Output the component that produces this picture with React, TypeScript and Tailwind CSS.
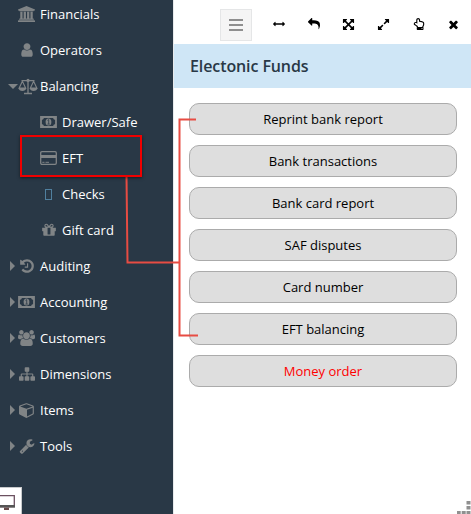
import { FaRegHandPointUp } from "react-icons/fa";

const paths = {
  bank: "M960 0l960 384v128h-128q0 26-20.5 45t-48.5 19h-1526q-28 0-48.5-19t-20.5-45h-128v-128zm-704 640h256v768h128v-768h256v768h128v-768h256v768h128v-768h256v768h59q28 0 48.5 19t20.5 45v64h-1664v-64q0-26 20.5-45t48.5-19h59v-768zm1595 960q28 0 48.5 19t20.5 45v128h-1920v-128q0-26 20.5-45t48.5-19h1782z",
  user: "M1536 1399q0 109-62.5 187t-150.5 78h-854q-88 0-150.5-78t-62.5-187q0-85 8.5-160.5t31.5-152 58.5-131 94-89 134.5-34.5q131 128 313 128t313-128q76 0 134.5 34.5t94 89 58.5 131 31.5 152 8.5 160.5zm-256-887q0 159-112.5 271.5t-271.5 112.5-271.5-112.5-112.5-271.5 112.5-271.5 271.5-112.5 271.5 112.5 112.5 271.5z",
  sitemap: "M1792 1248v320q0 40-28 68t-68 28h-320q-40 0-68-28t-28-68v-320q0-40 28-68t68-28h96v-192h-512v192h96q40 0 68 28t28 68v320q0 40-28 68t-68 28h-320q-40 0-68-28t-28-68v-320q0-40 28-68t68-28h96v-192h-512v192h96q40 0 68 28t28 68v320q0 40-28 68t-68 28h-320q-40 0-68-28t-28-68v-320q0-40 28-68t68-28h96v-192q0-52 38-90t90-38h512v-192h-96q-40 0-68-28t-28-68v-320q0-40 28-68t68-28h320q40 0 68 28t28 68v320q0 40-28 68t-68 28h-96v192h512q52 0 90 38t38 90v192h96q40 0 68 28t28 68z",
  wrench: "M448 1472q0-26-19-45t-45-19-45 19-19 45 19 45 45 19 45-19 19-45zm644-420l-682 682q-37 37-90 37-52 0-91-37l-106-108q-38-36-38-90 0-53 38-91l681-681q39 98 114.5 173.5t173.5 114.5zm634-435q0 39-23 106-47 134-164.5 217.5t-258.5 83.5q-185 0-316.5-131.5t-131.5-316.5 131.5-316.5 316.5-131.5q58 0 121.5 16.5t107.5 46.5q16 11 16 28t-16 28l-293 169v224l193 107q5-3 79-48.5t135.5-81 70.5-35.5q15 0 23.5 10t8.5 25z",
  history: "M1664 896q0 156-61 298t-164 245-245 164-298 61q-172 0-327-72.5t-264-204.5q-7-10-6.5-22.5t8.5-20.5l137-138q10-9 25-9 16 2 23 12 73 95 179 147t225 52q104 0 198.5-40.5t163.5-109.5 109.5-163.5 40.5-198.5-40.5-198.5-109.5-163.5-163.5-109.5-198.5-40.5q-98 0-188 35.5t-160 101.5l137 138q31 30 14 69-17 40-59 40h-448q-26 0-45-19t-19-45v-448q0-42 40-59 39-17 69 14l130 129q107-101 244.5-156.5t284.5-55.5q156 0 298 61t245 164 164 245 61 298zm-640-288v448q0 14-9 23t-23 9h-320q-14 0-23-9t-9-23v-64q0-14 9-23t23-9h224v-352q0-14 9-23t23-9h64q14 0 23 9t9 23z",
  gift: "M1056 1356v-716h-320v716q0 25 18 38.5t46 13.5h192q28 0 46-13.5t18-38.5zm-456-844h195l-126-161q-26-31-69-31-40 0-68 28t-28 68 28 68 68 28zm688-96q0-40-28-68t-68-28q-43 0-69 31l-125 161h194q40 0 68-28t28-68zm376 256v320q0 14-9 23t-23 9h-96v416q0 40-28 68t-68 28h-1088q-40 0-68-28t-28-68v-416h-96q-14 0-23-9t-9-23v-320q0-14 9-23t23-9h440q-93 0-158.5-65.5t-65.5-158.5 65.5-158.5 158.5-65.5q107 0 168 77l128 165 128-165q61-77 168-77 93 0 158.5 65.5t65.5 158.5-65.5 158.5-158.5 65.5h440q14 0 23 9t9 23z",
  cube: "M896 1629l640-349v-636l-640 233v752zm-64-865l698-254-698-254-698 254zm832-252v768q0 35-18 65t-49 47l-704 384q-28 16-61 16t-61-16l-704-384q-31-17-49-47t-18-65v-768q0-40 23-73t61-47l704-256q22-8 44-8t44 8l704 256q38 14 61 47t23 73z",
  users: "M593 896q-162 5-265 128h-134q-82 0-138-40.5t-56-118.5q0-353 124-353 6 0 43.5 21t97.5 42.5 119 21.5q67 0 133-23-5 37-5 66 0 159 93 256zm1071 637q0 120-73 189.5t-194 69.5h-874q-121 0-194-69.5t-73-189.5q0-53 3.5-103.5t14-109 26.5-108.5 43-97.5 62-81 85.5-53.5 111.5-20q10 0 43 21.5t73 48 107 48 135 21.5 135-21.5 107-48 73-48 43-21.5q61 0 111.5 20t85.5 53.5 62 81 43 97.5 26.5 108.5 14 109 3.5 103.5zm-1024-1277q0 106-75 181t-181 75-181-75-75-181 75-181 181-75 181 75 75 181zm704 384q0 159-112.5 271.5t-271.5 112.5-271.5-112.5-112.5-271.5 112.5-271.5 271.5-112.5 271.5 112.5 112.5 271.5zm576 225q0 78-56 118.5t-138 40.5h-134q-103-123-265-128 93-97 93-256 0-29-5-66 66 23 133 23 59 0 119-21.5t97.5-42.5 43.5-21q124 0 124 353zm-128-609q0 106-75 181t-181 75-181-75-75-181 75-181 181-75 181 75 75 181z",
  arrowsH: "M1792 896q0 26-19 45l-256 256q-19 19-45 19t-45-19-19-45v-128h-1024v128q0 26-19 45t-45 19-45-19l-256-256q-19-19-19-45t19-45l256-256q19-19 45-19t45 19 19 45v128h1024v-128q0-26 19-45t45-19 45 19l256 256q19 19 19 45z",
  reply: "M1792 1120q0 166-127 451-3 7-10.5 24t-13.5 30-13 22q-12 17-28 17-15 0-23.5-10t-8.5-25q0-9 2.5-26.5t2.5-23.5q5-68 5-123 0-112-19.5-200.5t-54-153.5-88.5-112-112.5-79.5-135.5-49.5-149.5-23.5-162.5-7h-224v256q0 26-19 45t-45 19-45-19l-512-512q-19-19-19-45t19-45l512-512q19-19 45-19t45 19 19 45v256h224q713 0 875 403 53 134 53 333z",
  arrowsAlt: "M1411 541l-355 355 355 355 144-144q29-31 70-14 39 17 39 59v448q0 26-19 45t-45 19h-448q-42 0-59-40-17-39 14-69l144-144-355-355-355 355 144 144q31 30 14 69-17 40-59 40h-448q-26 0-45-19t-19-45v-448q0-42 40-59 39-17 69 14l144 144 355-355-355-355-144 144q-19 19-45 19-12 0-24-5-40-17-40-59v-448q0-26 19-45t45-19h448q42 0 59 40 17 39-14 69l-144 144 355 355 355-355-144-144q-31-30-14-69 17-40 59-40h448q26 0 45 19t19 45v448q0 42-39 59-13 5-25 5-26 0-45-19z",
  expand: "M883 1056q0 13-10 23l-332 332 144 144q19 19 19 45t-19 45-45 19h-448q-26 0-45-19t-19-45v-448q0-26 19-45t45-19 45 19l144 144 332-332q10-10 23-10t23 10l114 114q10 10 10 23zm781-864v448q0 26-19 45t-45 19-45-19l-144-144-332 332q-10 10-23 10t-23-10l-114-114q-10-10-10-23t10-23l332-332-144-144q-19-19-19-45t19-45 45-19h448q26 0 45 19t19 45z",
  times: "M1490 1322q0 40-28 68l-136 136q-28 28-68 28t-68-28l-294-294-294 294q-28 28-68 28t-68-28l-136-136q-28-28-28-68t28-68l294-294-294-294q-28-28-28-68t28-68l136-136q28-28 68-28t68 28l294 294 294-294q28-28 68-28t68 28l136 136q28 28 28 68t-28 68l-294 294 294 294q28 28 28 68z",
};

function Glyph({ name, box = "0 0 1792 1792", className }: { name: keyof typeof paths; box?: string; className: string }) {
  return (
    <svg viewBox={box} className={className} fill="currentColor">
      <path d={paths[name]} />
    </svg>
  );
}

function Money() {
  return (
    <svg viewBox="0 0 17 12" className="h-3 w-[17px]" fill="none">
      <path d="M1 1h15v10H1z" stroke="currentColor" strokeWidth="1.8" />
      <path d="M1 1h3a3 3 0 0 1-3 3zM16 1h-3a3 3 0 0 0 3 3zM16 11h-3a3 3 0 0 1 3-3zM1 11h3a3 3 0 0 0-3-3z" fill="currentColor" />
      <ellipse cx="8.500" cy="6" rx="2.900" ry="3.600" fill="currentColor" />
      <path d="M7.500 4.400l1.200-.8v4.300M7.400 8.100h2.400" stroke="#293846" strokeWidth="0.8" />
    </svg>
  );
}

function Scales() {
  return (
    <svg viewBox="0 0 20 17" className="h-[17px] w-5 shrink-0" fill="none" stroke="currentColor" strokeWidth="1.300">
      <path d="M3.500 2.600h13M10 1v14M6 15.500h8" />
      <circle cx="10" cy="2.400" r="1.600" fill="currentColor" stroke="none" />
      <path d="M4.400 3.200L1.200 10h6.400zM15.600 3.200L12.400 10h6.400z" strokeWidth="1.100" />
      <path d="M.4 10h8c-.4 2-2 2.900-4 2.900S.8 12 .4 10zM11.600 10h8c-.4 2-2 2.900-4 2.900s-3.600-.9-4-2.900z" fill="currentColor" stroke="none" />
    </svg>
  );
}

function Card() {
  return (
    <svg viewBox="0 0 17 14" className="h-[14px] w-[17px]" fill="none">
      <rect x="0.700" y="0.700" width="15.600" height="12.600" rx="1.200" stroke="currentColor" strokeWidth="1.300" />
      <path d="M1 5.500h15" stroke="currentColor" strokeWidth="3" />
      <path d="M2.300 11.300h2.200M5.500 11.300h3.500" stroke="currentColor" strokeWidth="1" />
    </svg>
  );
}

const wide = "0 0 1920 1792";

const items = [
  { label: "Financials", caret: "", icon: <Glyph name="bank" box={wide} className="h-4 w-[17px]" /> },
  { label: "Operators", caret: "", icon: <Glyph name="user" className="size-4" /> },
  {
    label: "Balancing",
    caret: "down",
    icon: <span className="ml-[2px] flex"><Scales /></span>,
    children: [
      { label: "Drawer/Safe", icon: <Money /> },
      { label: "EFT", icon: <Card /> },
      { label: "Checks", icon: <span className="h-[11px] w-[7px] border border-[#50809f]" /> },
      { label: "Gift card", icon: <Glyph name="gift" className="size-4" /> },
    ],
  },
  { label: "Auditing", caret: "right", icon: <Glyph name="history" className="size-4" /> },
  { label: "Accounting", caret: "right", icon: <Money /> },
  { label: "Customers", caret: "right", icon: <Glyph name="users" box={wide} className="h-4 w-[17px]" /> },
  { label: "Dimensions", caret: "right", icon: <Glyph name="sitemap" className="size-4" /> },
  { label: "Items", caret: "right", icon: <Glyph name="cube" className="size-4" /> },
  { label: "Tools", caret: "right", icon: <Glyph name="wrench" className="size-4" /> },
];

const actions = ["Reprint bank report", "Bank transactions", "Bank card report", "SAF disputes", "Card number", "EFT balancing", "Money order"];

function Caret({ dir }: { dir: string }) {
  if (dir === "down") return <svg viewBox="0 0 10 5" className="h-[5px] w-[10px]" fill="currentColor"><path d="M0 0h10L5 5z" /></svg>;
  if (dir === "right") return <svg viewBox="0 0 5 10" className="h-[10px] w-[5px]" fill="currentColor"><path d="M0 0v10l5-5z" /></svg>;
  return null;
}

export default function App() {
  return (
    <div className="relative flex h-[514px] w-[471px] overflow-hidden bg-white font-['Open_Sans',sans-serif] text-[13px]">
      <aside className="flex w-[173px] shrink-0 flex-col justify-between bg-[#293846] text-[#808486]">
        <nav className="-mt-1">
          {items.map((item) => (
            <div key={item.label}>
              <div className="flex h-9 items-center">
                <span className="flex w-[18px] justify-end pr-[3px]">
                  <span className={item.caret === "down" ? "-mr-[3px]" : ""}><Caret dir={item.caret} /></span>
                </span>
                <span className="flex w-[22px] items-center"><span className="flex w-[17px] justify-center">{item.icon}</span></span>
                <span className="pt-[2px] text-white">{item.label}</span>
              </div>
              {item.children?.map((child) => (
                <div key={child.label} className="flex h-9 items-center pl-10">
                  <span className="flex w-[22px] items-center"><span className="flex w-[17px] justify-center">{child.icon}</span></span>
                  <span className="pt-[2px] text-white">{child.label}</span>
                </div>
              ))}
            </div>
          ))}
        </nav>
        <div className="flex h-[27px] w-[22px] items-start border-t border-r border-[#c8cacc] bg-white pt-[7px]">
          <svg viewBox="0 0 15 16" className="h-4 w-[15px]" fill="none">
            <path d="M0 .7h14.300v11H0" stroke="#6b5060" strokeWidth="1.300" />
            <path d="M0 11.300h15" stroke="#555" strokeWidth="2.600" />
            <path d="M4 13.800h5" stroke="#684a4a" strokeWidth="2.400" />
          </svg>
        </div>
      </aside>

      <main className="flex flex-1 flex-col border-l border-[#e7eaec]">
        <div className="flex h-11 shrink-0 items-center text-black">
          <button className="mt-[6px] ml-[46px] flex size-8 items-center justify-center border border-[#e5e6e7] bg-[#f5f5f5]">
            <svg viewBox="0 0 14 12" className="h-3 w-[14px]" fill="#8f8f8f"><path d="M0 0h14v2H0zM0 5h14v2H0zM0 10h14v2H0z" /></svg>
          </button>
          <div className="mt-1 ml-[9px] flex [&>span]:flex [&>span]:w-[35px] [&>span]:justify-center">
            <span><Glyph name="arrowsH" className="size-3" /></span>
            <span><Glyph name="reply" className="size-3" /></span>
            <span><Glyph name="arrowsAlt" className="size-[13px]" /></span>
            <span><Glyph name="expand" className="size-[13px]" /></span>
            <span><FaRegHandPointUp className="size-3" /></span>
            <span><Glyph name="times" className="size-[13px]" /></span>
          </div>
        </div>
        <h1 className="flex h-11 shrink-0 items-center bg-[#cfe6f6] pl-4 text-[16px] font-semibold tracking-[-0.1px] text-[#293846]">Electonic Funds</h1>
        <div className="flex flex-col gap-[10px] pt-[15px] pl-[15px]">
          {actions.map((label) => (
            <button
              key={label}
              className={`h-8 w-[268px] rounded-[10px] border border-[#ababab] bg-[#dedede] pt-[2px] ${label === "Money order" ? "text-[#ff0000]" : "text-black"}`}
            >
              {label}
            </button>
          ))}
        </div>
      </main>

      {/* Callout from the EFT entry to its actions */}
      <svg viewBox="0 0 471 514" className="pointer-events-none absolute inset-0 h-full w-full" fill="none">
        <path d="M126.500 176L127.500 262.500H179.500M196 119.500H179.500V335.500H198" stroke="#e74c43" strokeWidth="2" />
      </svg>
      <div className="absolute top-[135px] left-[20px] h-[42px] w-[122px] border-2 border-[#f00000] shadow-[0_1px_3px_rgba(0,0,0,0.5)]" />

      {/* Resize grip */}
      <svg viewBox="0 0 14 14" className="absolute right-0 bottom-0 size-[14px]" fill="#909090">
        <path d="M9.500 1h4v3.500h-4zM9.500 6h4v3.500h-4zM9.500 11h4v3h-4zM4.700 11h4v3h-4zM0 11h3.700v3H0z" />
      </svg>
    </div>
  );
}
